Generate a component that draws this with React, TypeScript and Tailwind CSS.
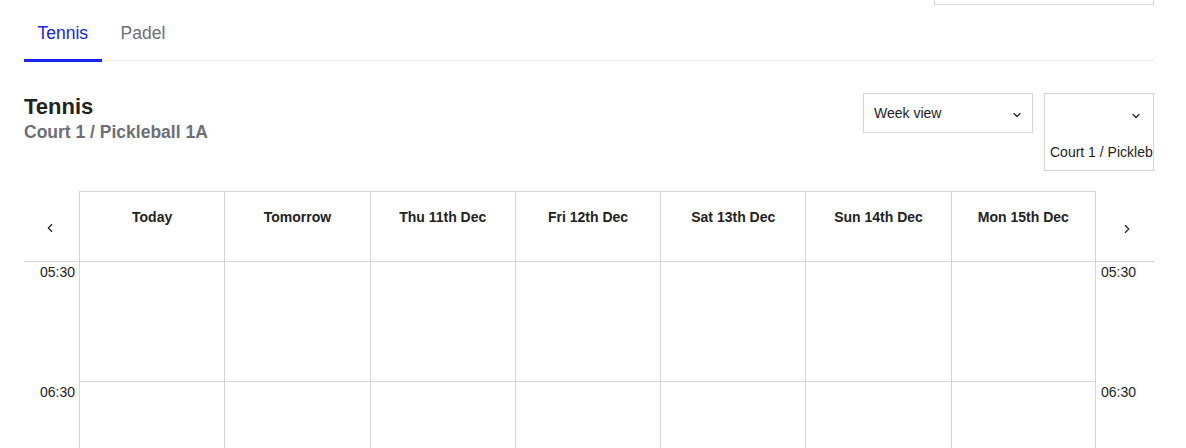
import { ChevronDown, ChevronLeft, ChevronRight } from "lucide-react";

const days = ["Today", "Tomorrow", "Thu 11th Dec", "Fri 12th Dec", "Sat 13th Dec", "Sun 14th Dec", "Mon 15th Dec"];
const times = ["05:30", "06:30"];

export default function App() {
  return (
    <div className="min-h-screen bg-white pl-6 pr-8 text-[#222]" style={{ fontFamily: '"Liberation Sans", Arial, sans-serif' }}>
      {/* top search box, cut off */}
      <div className="flex justify-end">
        <div className="h-[5px] w-[220px] border-x border-b border-[#d6d6d6]" />
      </div>

      {/* Tabs */}
      <div className="flex h-[56px] border-b border-[#ebebeb]">
        <button className="flex h-[57px] shrink-0 items-center border-b-[3px] border-[#1a22f0] px-[13.5px] pt-[2px] text-[17.5px] text-[#1a22f0]">
          Tennis
        </button>
        <button className="flex h-[55px] items-center pt-[2px] pr-[18px] pl-[19px] text-[17.5px] text-[#6e6e76]">Padel</button>
      </div>

      {/* Heading + selects */}
      <div className="mt-[32px] flex items-start justify-between">
        <div className="pt-[1px]">
          <h1 className="text-[22px] leading-[26px] font-bold text-[#222]">Tennis</h1>
          <p className="text-[17.5px] leading-[24px] font-bold text-[#6e6e76]">Court 1 / Pickleball 1A</p>
        </div>
        <div className="flex gap-[11px]">
          <div className="flex h-[40px] w-[170px] items-center justify-between border border-[#d6d6d6] pr-[9px] pl-[10px] text-[14px]">
            <span>Week view</span>
            <ChevronDown className="mt-[4px] h-[12px] w-[12px]" strokeWidth={2.4} />
          </div>
          <div className="flex h-[78px] w-[110px] flex-col overflow-hidden border border-[#d6d6d6] pl-[5px] text-[14px]">
            <div className="flex h-[40px] items-center justify-end pt-[4px] pr-[11px]">
              <ChevronDown className="h-[12px] w-[12px]" strokeWidth={2.4} />
            </div>
            <span className="mt-[8px] whitespace-nowrap">Court 1 / Pickleball 1A</span>
          </div>
        </div>
      </div>

      {/* Calendar */}
      <div className="mt-[20px] grid grid-cols-[55px_repeat(7,1fr)_58px]">
        <div className="flex items-center justify-center border-b border-[#d6d6d6] pt-[4px]">
          <ChevronLeft className="ml-[-3px] h-[14px] w-[14px]" strokeWidth={2} />
        </div>
        {days.map((d, i) => (
          <div
            key={d}
            className={`h-[71px] border-t border-b border-l border-[#d6d6d6] pt-[15px] text-center text-[14px] font-bold ${i === 6 ? "border-r" : ""}`}
          >
            {d}
          </div>
        ))}
        <div className="flex items-center justify-center border-b border-[#d6d6d6] pt-[6px]">
          <ChevronRight className="ml-[4px] h-[14px] w-[14px]" strokeWidth={2} />
        </div>

        {times.map((t) => (
          <div key={t} className="contents">
            <div className="pr-[4px] text-right text-[14px]">{t}</div>
            {days.map((d, i) => (
              <div key={d} className={`h-[120px] border-b border-l border-[#d6d6d6] ${i === 6 ? "border-r" : ""}`} />
            ))}
            <div className="pl-[5px] text-[14px]">{t}</div>
          </div>
        ))}
      </div>
    </div>
  );
}
